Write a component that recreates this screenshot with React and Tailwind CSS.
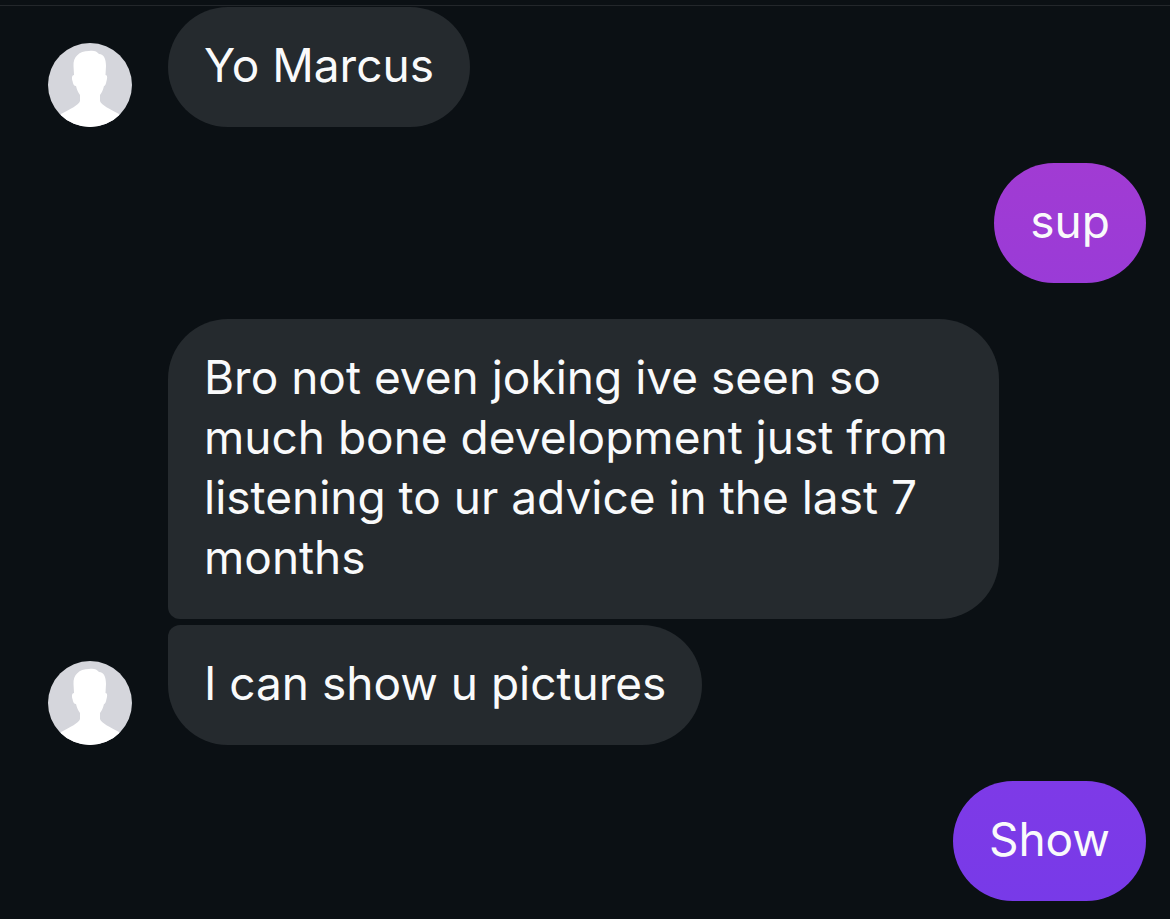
import React from 'react';

const threads = [
  { from: 'them', messages: ['Yo Marcus'] },
  { from: 'me', messages: ['sup'], tone: 'bg-linear-to-b from-[#a13bd3] to-[#9a3bd7]' },
  {
    from: 'them',
    messages: [
      'Bro not even joking ive seen so much bone development just from listening to ur advice in the last 7 months',
      'I can show u pictures',
    ],
  },
  { from: 'me', messages: ['Show'], tone: 'bg-linear-to-b from-[#7e3ae7] to-[#783ae8]' },
];

const Avatar = () => (
  <svg viewBox="0 0 84 84" className="h-21 w-21 shrink-0 rounded-full bg-[#d5d6dc]" role="img" aria-label="Profile picture">
    <path
      fill="#fff"
      d="M41 8C45 7 49 8 51 11C56 11 58 16 58 23L57.500 32C59.500 32 59.500 35 58.500 38C58 41 57 43 56 43C55 47 54 49 52 52V58C53 62 62 66 71 71V84H13V71C22 66 31 62 32 58V52C30 49 29 47 28 43C26 43 25 41 24.500 38C23.500 35 24 32 26 32L25.500 23C25 14 31 8 41 8Z"
    />
  </svg>
);

const corners = (index, count) => {
  if (count === 1) return 'rounded-[60px]';
  if (index === 0) return 'rounded-[60px] rounded-bl-xl';
  if (index === count - 1) return 'rounded-[60px] rounded-tl-xl';
  return 'rounded-[60px] rounded-l-xl';
};

const Bubble = ({ text, className }) => (
  <p className={`w-fit max-w-[831px] px-9 pt-7 pb-8 text-[46px] leading-[60px] text-[#f9fafb] ${className}`}>
    {text}
  </p>
);

const App = () => {
  return (
    <main className="min-h-screen overflow-hidden bg-[#0b1014] pt-[5px] font-['Inter','Liberation_Sans',sans-serif]">
      <div className="flex flex-col gap-9 border-t border-[#23272b] pt-px pr-6 pb-4 pl-12">
        {threads.map((thread, i) =>
          thread.from === 'them' ? (
            <section key={i} className="flex items-end gap-9">
              <Avatar />
              <div className="flex flex-col gap-1.5">
                {thread.messages.map((text, j) => (
                  <Bubble key={text} text={text} className={`bg-[#252a2e] ${corners(j, thread.messages.length)}`} />
                ))}
              </div>
            </section>
          ) : (
            <section key={i} className="flex flex-col items-end gap-1.5">
              {thread.messages.map((text) => (
                <Bubble key={text} text={text} className={`rounded-[60px] ${thread.tone}`} />
              ))}
            </section>
          )
        )}
      </div>
    </main>
  );
};

export default App;
